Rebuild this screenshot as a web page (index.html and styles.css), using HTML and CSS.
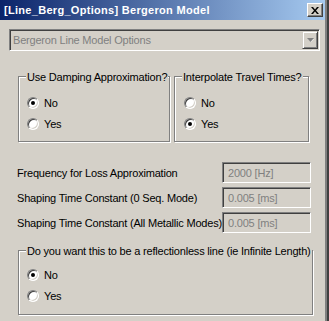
FILE: index.html
```html
<!DOCTYPE html>
<html>
<head>
    <title>[Line_Berg_Options] Bergeron Model</title>
    <link rel="stylesheet" href="styles.css">
</head>
<body>
    <div class="window">
        <div class="titlebar">
            <span class="title">[Line_Berg_Options] Bergeron Model</span>
            <span class="close">
                <svg width="8" height="7" viewBox="0 0 8 7">
                    <path d="M0 0h2l2 2.5 2-2.5h2l-3 3.5 3 3.5h-2l-2-2.5-2 2.5h-2l3-3.5z" fill="#000"/>
                </svg>
            </span>
        </div>

        <div class="content">
            <div class="combo">
                <span class="combo-text">Bergeron Line Model Options</span>
                <span class="combo-btn">
                    <svg width="7" height="5" viewBox="0 0 7 5">
                        <path d="M1 1h6l-3 3z" fill="#fff"/>
                        <path d="M0 0h7l-3.5 4z" fill="#808080"/>
                    </svg>
                </span>
            </div>

            <div class="groups">
                <div class="group group-damping">
                    <span class="group-title">Use Damping Approximation?</span>
                    <div class="radio-row"><span class="radio checked"></span>No</div>
                    <div class="radio-row"><span class="radio"></span>Yes</div>
                </div>
                <div class="group group-travel">
                    <span class="group-title">Interpolate Travel Times?</span>
                    <div class="radio-row"><span class="radio"></span>No</div>
                    <div class="radio-row"><span class="radio checked"></span>Yes</div>
                </div>
            </div>

            <div class="fields">
                <div class="field">
                    <label>Frequency for Loss Approximation</label>
                    <span class="edit">2000 [Hz]</span>
                </div>
                <div class="field">
                    <label>Shaping Time Constant (0 Seq. Mode)</label>
                    <span class="edit">0.005 [ms]</span>
                </div>
                <div class="field">
                    <label>Shaping Time Constant (All Metallic Modes)</label>
                    <span class="edit">0.005 [ms]</span>
                </div>
            </div>

            <div class="group group-reflect">
                <span class="group-title">Do you want this to be a reflectionless line (ie Infinite Length)</span>
                <div class="radio-row"><span class="radio checked"></span>No</div>
                <div class="radio-row"><span class="radio"></span>Yes</div>
            </div>
        </div>
    </div>
</body>
</html>
```

FILE: styles.css
```css
body {
    margin: 0;
    font-family: "Liberation Sans", Arial, sans-serif;
    font-size: 11px;
    letter-spacing: -0.2px;
    color: #000;
    background-color: #d4d0c8;
}
.window {
    width: 329px;
    height: 321px;
    box-sizing: border-box;
    background-color: #d4d0c8;
    border-right: 2px solid #404040;
    box-shadow: inset -2px 0 #808080;
    overflow: hidden;
}
.titlebar {
    height: 20px;
    margin-right: 2px;
    display: flex;
    align-items: center;
    justify-content: space-between;
    padding: 0 2px 0 4px;
    background: linear-gradient(to right, #0a246a, #a6caf0);
}
.title {
    color: #fff;
    font-weight: bold;
    font-size: 11px;
    letter-spacing: 0.3px;
}
.close {
    width: 16px;
    height: 14px;
    box-sizing: border-box;
    display: flex;
    align-items: center;
    justify-content: center;
    background-color: #d4d0c8;
    border: 1px solid;
    border-color: #fff #404040 #404040 #fff;
    box-shadow: inset -1px -1px #808080;
}
.content {
    padding: 9px 0 0 9px;
}
.combo {
    width: 311px;
    height: 22px;
    box-sizing: border-box;
    display: flex;
    align-items: center;
    justify-content: space-between;
    border: 1px solid;
    border-color: #808080 #fff #fff #808080;
    box-shadow: inset 1px 1px #404040, inset -1px -1px #d4d0c8;
    padding: 1px;
}
.combo-text {
    color: #808080;
    padding-left: 2px;
}
.combo-btn {
    width: 16px;
    height: 18px;
    box-sizing: border-box;
    display: flex;
    align-items: center;
    justify-content: center;
    border: 1px solid;
    border-color: #d4d0c8 #404040 #404040 #d4d0c8;
    box-shadow: inset 1px 1px #fff, inset -1px -1px #808080;
}
.groups {
    display: flex;
    gap: 4px;
    margin: 25px 0 0 9px;
}
.group {
    position: relative;
    box-sizing: border-box;
    border: 1px solid #808080;
    box-shadow: inset 1px 1px #fff, 1px 1px #fff;
}
.group-title {
    position: absolute;
    top: -6px;
    left: 7px;
    padding: 0 1px;
    line-height: 13px;
    white-space: nowrap;
    background-color: #d4d0c8;
}
.group-damping {
    width: 152px;
    height: 66px;
    padding: 15px 0 0 8px;
}
.group-travel {
    width: 135px;
    height: 66px;
    padding: 15px 0 0 9px;
}
.group-reflect {
    width: 295px;
    height: 65px;
    margin: 17px 0 0 9px;
    padding: 13px 0 0 8px;
}
.radio-row {
    height: 21px;
    display: flex;
    align-items: center;
    gap: 5px;
}
.radio {
    position: relative;
    width: 12px;
    height: 12px;
    box-sizing: border-box;
    border-radius: 50%;
    background-color: #fff;
    border: 1px solid;
    border-color: #808080 #fff #fff #808080;
    box-shadow: inset 1px 1px #404040, inset -1px -1px #d4d0c8;
}
.radio.checked::after {
    content: "";
    position: absolute;
    left: 3px;
    top: 3px;
    width: 4px;
    height: 4px;
    border-radius: 50%;
    background-color: #000;
}
.fields {
    display: flex;
    flex-direction: column;
    gap: 4px;
    margin: 20px 0 0 8px;
}
.field {
    display: flex;
    align-items: center;
    height: 21px;
}
.field label {
    flex: 0 0 205px;
    white-space: nowrap;
}
.edit {
    width: 89px;
    height: 21px;
    box-sizing: border-box;
    flex-shrink: 0;
    display: flex;
    align-items: center;
    padding-left: 5px;
    color: #808080;
    background-color: #d4d0c8;
    border: 1px solid;
    border-color: #808080 #fff #fff #808080;
    box-shadow: inset 1px 1px #404040, inset -1px -1px #d4d0c8;
}
```
